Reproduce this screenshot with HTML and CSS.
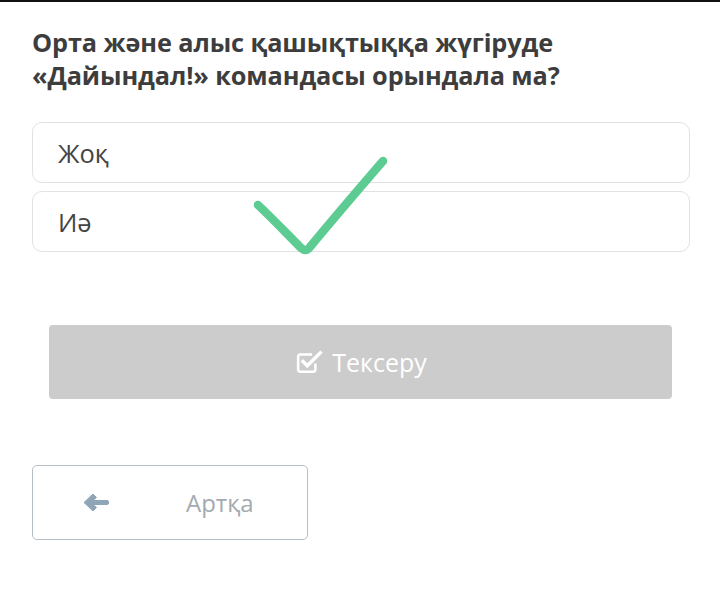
FILE: index.html
```html
<!DOCTYPE html>
<html lang="kk">
<head>
<meta charset="utf-8">
<link rel="stylesheet" href="styles.css">
</head>
<body>
<div class="page">
  <h1 class="question">Орта және алыс қашықтыққа жүгіруде «Дайындал!» командасы орындала ма?</h1>
  <div class="options">
    <div class="option">Жоқ</div>
    <div class="option">Иә</div>
    <svg class="tick" width="150" height="110" viewBox="0 0 150 110">
      <path d="M10 53 C 25 67, 40 83, 52 95 C 56 99, 59 99, 62 95 C 85 67, 110 38, 135 9" fill="none" stroke="#5dcc92" stroke-width="8.5" stroke-linecap="round" stroke-linejoin="round"/>
    </svg>
  </div>
  <button class="check-btn">
    <svg class="check-icon" width="28" height="26" viewBox="0 0 26 24">
      <path d="M18 13.5 V19 a2 2 0 0 1 -2 2 H4 a2 2 0 0 1 -2 -2 V7 a2 2 0 0 1 2 -2 H15" fill="none" stroke="#fff" stroke-width="2.4" stroke-linejoin="round"/>
      <path d="M6.5 11.5 L10.5 15.5 L22.5 3.5" fill="none" stroke="#fff" stroke-width="3.2" stroke-linecap="square"/>
    </svg>
    <span>Тексеру</span>
  </button>
  <button class="back-btn">
    <svg class="arrow" width="26" height="21" viewBox="0 0 26 20">
      <path d="M1 10 L10 1.5 L13.5 5 L10 8 H24 a1.5 1.5 0 0 1 1.5 1.5 v1 a1.5 1.5 0 0 1 -1.5 1.5 H10 L13.5 15 L10 18.5 Z" fill="#8ea6b6" stroke="#8ea6b6" stroke-width="1" stroke-linejoin="round"/>
    </svg>
    <span class="back-label">Артқа</span>
  </button>
</div>
</body>
</html>
```
FILE: styles.css
```css
html, body {
  margin: 0;
  padding: 0;
  background: #ffffff;
}
body {
  border-top: 2px solid #111;
  font-family: "Open Sans", "Noto Sans", sans-serif;
}
.page {
  padding: 24px 30px 40px 32px;
  display: flex;
  flex-direction: column;
  align-items: flex-start;
}
.question {
  margin: 0;
  font-size: 25.3px;
  line-height: 33px;
  font-weight: 700;
  color: #3d3d3d;
  max-width: 590px;
  letter-spacing: -0.1px;
}
.options {
  position: relative;
  margin-top: 30px;
  width: 658px;
  display: flex;
  flex-direction: column;
  gap: 8px;
}
.option {
  height: 59px;
  border: 1px solid #e2e2e2;
  border-radius: 10px;
  padding-left: 25px;
  display: flex;
  align-items: center;
  font-size: 25.5px;
  color: #444;
}
.tick {
  position: absolute;
  left: 216px;
  top: 30px;
}
.check-btn {
  margin: 73px 0 0 17px;
  width: 623px;
  height: 74px;
  border: none;
  border-radius: 4px;
  background: #cccccc;
  color: #fff;
  font-family: inherit;
  font-size: 25px;
  display: flex;
  align-items: center;
  justify-content: center;
  gap: 8px;
  padding: 0 0 0 2px;
}
.check-icon {
  display: block;
}
.back-btn {
  margin-top: 66px;
  width: 276px;
  height: 75px;
  border: 1px solid #b5bec4;
  border-radius: 5px;
  background: #fff;
  display: flex;
  align-items: center;
  padding: 0 0 0 50px;
  font-family: inherit;
  font-size: 24px;
  color: #a3aab0;
}
.arrow {
  display: block;
}
.back-label {
  margin-left: 77px;
}
```
